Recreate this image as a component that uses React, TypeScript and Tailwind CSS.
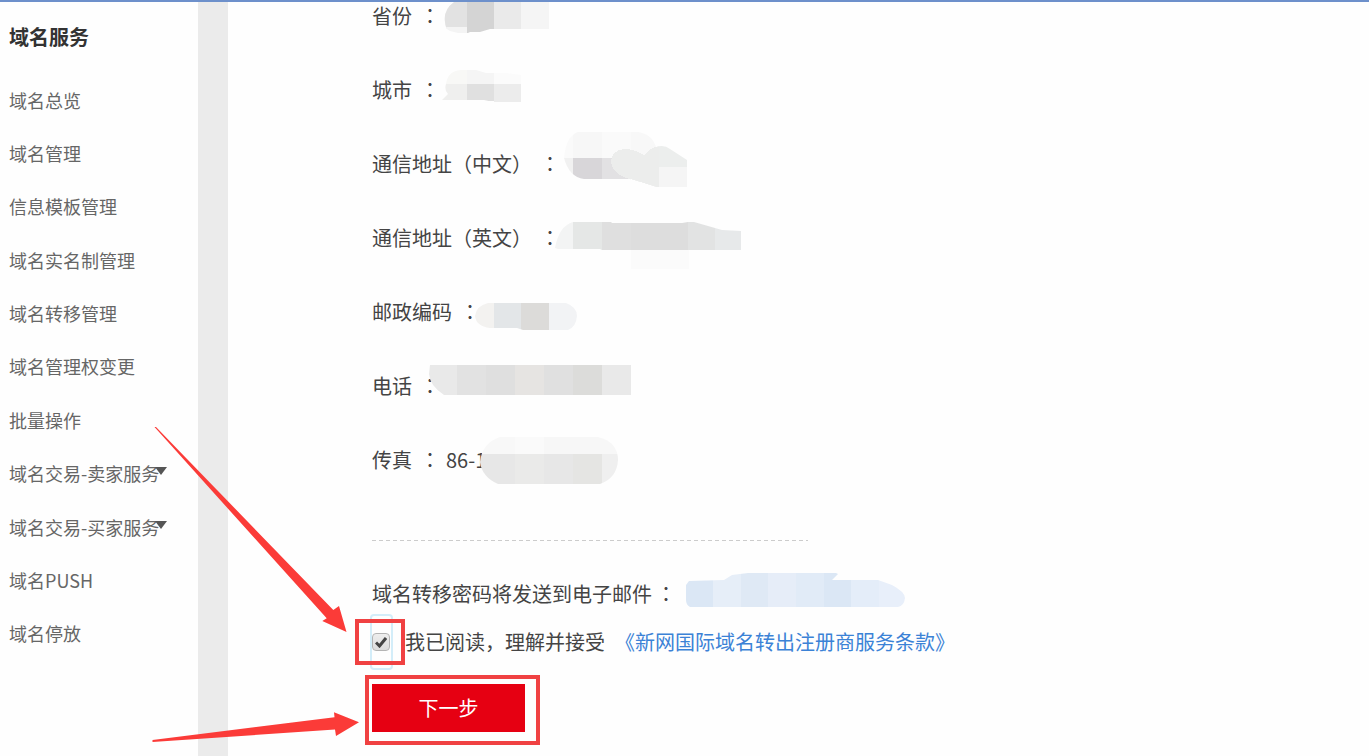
import React from "react";

type Tile = [x: number, y: number, w: number, h: number, fill: string];

interface Mask {
  outline: string;
  tiles: Tile[];
  overlay?: { path: string; fill: string };
}

interface Field {
  id: string;
  label: string;
  value?: string;
  mask: Mask;
}

const menu: { text: string; arrow?: boolean }[] = [
  { text: "域名总览" },
  { text: "域名管理" },
  { text: "信息模板管理" },
  { text: "域名实名制管理" },
  { text: "域名转移管理" },
  { text: "域名管理权变更" },
  { text: "批量操作" },
  { text: "域名交易-卖家服务", arrow: true },
  { text: "域名交易-买家服务", arrow: true },
  { text: "域名PUSH" },
  { text: "域名停放" },
];

// Mask shapes are drawn in coordinates local to their row (origin: top left of the row).
const fields: Field[] = [
  {
    id: "province",
    label: "省份",
    mask: {
      outline: "M82 0H177V27H118L108 30H98L96 31H86L78 29Q73 27 73 20Q71 8 82 0Z",
      tiles: [
        [70, 0, 25, 27, "#e2e2e2"],
        [70, 25, 26, 8, "#f4f4f4"],
        [95, 0, 27, 32, "#d4d4d4"],
        [122, 0, 27, 27, "#eaeaea"],
        [149, 0, 28, 27, "#f5f5f5"],
      ],
    },
  },
  {
    id: "city",
    label: "城市",
    mask: {
      outline: "M74 8Q76 -6 90 -6H104L114 -3H134L149 -1V26H121L112 24H70L76 18Q72 14 74 8Z",
      tiles: [
        [70, -6, 25, 14, "#f8f8f6"],
        [95, -6, 27, 14, "#f5f5f5"],
        [122, -6, 27, 14, "#fbfbfb"],
        [70, 8, 25, 16, "#efefee"],
        [95, 8, 27, 17, "#e0e0e0"],
        [122, 8, 27, 18, "#ececec"],
      ],
    },
  },
  {
    id: "address-cn",
    label: "通信地址（中文）",
    mask: {
      outline:
        "M192 8Q194 -14 206 -18H266Q280 -16 284 -3Q292 -6 298 -1L315 10V37H284L268 32L258 29H212Q197 27 192 8Z",
      tiles: [
        [190, -18, 11, 26, "#fafafa"],
        [201, -18, 29, 26, "#f7f7f7"],
        [230, -18, 29, 26, "#fafafa"],
        [259, -18, 28, 26, "#f8f8f8"],
        [190, 8, 11, 22, "#f1f1f1"],
        [201, 8, 29, 21, "#d8d6d9"],
        [230, 8, 29, 22, "#e2e1e3"],
        [287, -10, 28, 27, "#eceeed"],
        [287, 17, 28, 20, "#f5f5f5"],
      ],
      overlay: {
        path: "M239 10Q241 0 252 -1Q262 -1 272 5Q279 -3 287 -4V37H284L268 32L258 29Q240 25 239 10Z",
        fill: "#ecedec",
      },
    },
  },
  {
    id: "address-en",
    label: "通信地址（英文）",
    mask: {
      outline: "M183 24Q187 2 201 -2H239L240 -1H310L316 -2H322L350 6L369 7V26H317V45H259V26H230L228 25H186Z",
      tiles: [
        [183, -2, 18, 28, "#f3f4f4"],
        [201, -2, 29, 28, "#e5e7e6"],
        [230, -2, 29, 28, "#dfdfdf"],
        [259, -2, 29, 28, "#dddddd"],
        [288, -2, 28, 28, "#dddddd"],
        [316, -2, 27, 28, "#e2e3e3"],
        [343, -2, 26, 28, "#e7e9ea"],
        [259, 26, 58, 19, "#fbfbfb"],
      ],
    },
  },
  {
    id: "postcode",
    label: "邮政编码",
    mask: {
      outline: "M116 5H194Q205 9 205 18Q204 29 196 32H151L145 30H118Q104 28 103 18Q104 8 116 5Z",
      tiles: [
        [102, 4, 20, 28, "#f3f2f0"],
        [122, 4, 27, 28, "#e3e6e8"],
        [149, 4, 28, 28, "#dcdbd9"],
        [177, 4, 28, 28, "#f2f3f5"],
      ],
    },
  },
  {
    id: "phone",
    label: "电话",
    mask: {
      outline: "M58 -7H259V23H72Q58 14 57 2Z",
      tiles: [
        [56, -7, 29, 30, "#e9e9e9"],
        [85, -7, 29, 30, "#e2e2e2"],
        [114, -7, 29, 30, "#dfdfdf"],
        [143, -7, 29, 30, "#e6e4e2"],
        [172, -7, 29, 30, "#e0e0e0"],
        [201, -7, 29, 30, "#dcdcda"],
        [230, -7, 29, 30, "#e9e9e9"],
      ],
    },
  },
  {
    id: "fax",
    label: "传真",
    value: "86-1",
    mask: {
      outline: "M128 -9H226Q246 -4 246 14Q245 32 228 38H126Q110 31 108 16Q110 -3 128 -9Z",
      tiles: [
        [106, -10, 37, 18, "#f8f8f8"],
        [143, -10, 29, 18, "#fafafa"],
        [172, -10, 75, 18, "#f7f7f7"],
        [106, 8, 37, 30, "#e7e7e7"],
        [143, 8, 29, 30, "#eaeae9"],
        [172, 8, 29, 30, "#e7e7e7"],
        [201, 8, 29, 30, "#e5e5e3"],
        [230, 8, 17, 30, "#efefef"],
      ],
    },
  },
];

const emailMask: Mask = {
  outline:
    "M317 1L352 0L360 -5L376 -7H464L466 -6L460 0H506L520 5Q533 12 533 18Q532 26 526 27H318Q314 25 314 20V5Z",
  tiles: [
    [313, -7, 28, 35, "#dbe7f5"],
    [341, -7, 28, 35, "#e6eef8"],
    [369, -7, 27, 35, "#dfe9f5"],
    [396, -7, 28, 35, "#e6edf8"],
    [424, -7, 28, 35, "#e1ebf7"],
    [452, -7, 27, 35, "#dbe7f5"],
    [479, -7, 28, 35, "#e4edf9"],
    [507, -7, 27, 35, "#e8effa"],
  ],
};

function MaskShape({ id, mask }: { id: string; mask: Mask }) {
  return (
    <svg
      className="pointer-events-none absolute top-0 left-0 overflow-visible"
      width="560"
      height="28"
      aria-hidden="true"
    >
      <clipPath id={id}>
        <path d={mask.outline} />
      </clipPath>
      <g clipPath={`url(#${id})`} shapeRendering="crispEdges">
        {mask.tiles.map(([x, y, w, h, fill], i) => (
          <rect key={i} x={x} y={y} width={w} height={h} fill={fill} />
        ))}
        {mask.overlay && <path d={mask.overlay.path} fill={mask.overlay.fill} />}
      </g>
    </svg>
  );
}

function Colon() {
  return <span className="font-['Noto_Sans_CJK_TC',sans-serif]">：</span>;
}

function Sidebar() {
  return (
    <aside className="w-[198px] shrink-0 pl-[9px]">
      <h2 className="pt-5 text-xl leading-[30px] font-bold text-[#333]">域名服务</h2>
      <nav className="pt-[21px]">
        <ul className="grid h-[587px] auto-rows-fr">
          {menu.map((item) => (
            <li key={item.text} className="flex items-center">
              <a href="#" className="flex items-center text-lg whitespace-nowrap text-[#666]">
                {item.text}
                {item.arrow && (
                  <svg width="12" height="8" viewBox="0 0 12 8" className="-mt-1 -ml-1" aria-hidden="true">
                    <path d="M0 0H12L6 8Z" fill="#555" />
                  </svg>
                )}
              </a>
            </li>
          ))}
        </ul>
      </nav>
    </aside>
  );
}

function Arrows() {
  return (
    <svg
      className="pointer-events-none absolute top-0 left-0"
      width="400"
      height="756"
      viewBox="0 0 400 756"
      fill="#fb3b38"
      aria-hidden="true"
    >
      <path d="M154.5 427L156 427L333.3 610L339 606L346.5 632L322.3 621L326.7 618.3Z" />
      <path d="M152.5 740L334.5 717.3L334 712.3L359 722.3L336 736L335 729.5L152.5 742Z" />
    </svg>
  );
}

export default function App() {
  return (
    <div className="relative flex min-h-screen flex-col overflow-hidden bg-[#fefefe] font-['Noto_Sans_CJK_SC',sans-serif]">
      <div className="h-0.5 bg-[#6d90cb]" />
      <div className="flex flex-1">
        <Sidebar />
        <div className="w-[30px] shrink-0 bg-[#ebebeb]" />
        <main className="min-w-0 flex-1 pb-6 pl-36 text-xl leading-7 text-[#444]">
          <dl className="flex flex-col gap-[46px]">
            {fields.map((f) => (
              <div key={f.id} className="relative flex gap-1.5 whitespace-nowrap">
                <dt className="flex gap-2">
                  {f.label}
                  <Colon />
                </dt>
                <dd>{f.value}</dd>
                <MaskShape id={f.id} mask={f.mask} />
              </div>
            ))}
          </dl>

          <div className="mt-[66px] h-px w-[436px] bg-[repeating-linear-gradient(90deg,#ccc_0_4px,transparent_4px_7px)]" />

          <p className="relative mt-[39px] flex gap-1 whitespace-nowrap">
            域名转移密码将发送到电子邮件
            <Colon />
            <MaskShape id="email" mask={emailMask} />
          </p>

          <div className="mt-5 flex items-center whitespace-nowrap">
            <span className="relative flex h-7 w-[33px] items-center">
              <span className="absolute -top-3.5 -left-0.5 h-14 w-[23px] rounded-sm border-2 border-[#d3edf9]" />
              <input
                id="agree"
                type="checkbox"
                defaultChecked
                className="peer relative h-[18px] w-[18px] appearance-none rounded-sm border border-[#b4b4b4] bg-linear-to-b from-[#eee] to-[#dcdcdc]"
              />
              <svg
                className="pointer-events-none absolute top-2 left-[3px] hidden peer-checked:block"
                width="12"
                height="12"
                viewBox="0 0 12 12"
                aria-hidden="true"
              >
                <path d="M1 6.5L4.5 10L11 2" fill="none" stroke="#444" strokeWidth="3" />
              </svg>
              <span className="pointer-events-none absolute -top-[9px] -left-[17px] h-[46px] w-[50px] border-4 border-[#f04142]" />
            </span>
            <label htmlFor="agree">我已阅读，理解并接受</label>
            <a href="#" className="ml-2.5 text-[#3b82d6]">
              《新网国际域名转出注册商服务条款》
            </a>
          </div>

          <div className="relative mt-7 w-[153px]">
            <button type="button" className="block h-12 w-full bg-[#e60012] text-xl text-white">
              下一步
            </button>
            <span className="pointer-events-none absolute -top-[9px] -left-[7px] h-[70px] w-[175px] border-4 border-[#f04142]" />
          </div>
        </main>
      </div>
      <Arrows />
    </div>
  );
}
